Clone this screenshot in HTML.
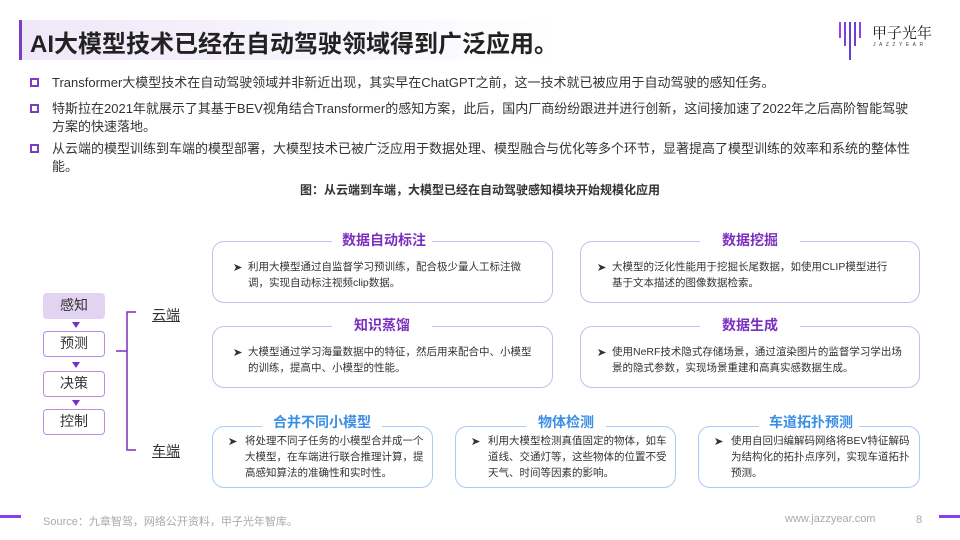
<!DOCTYPE html>
<html><head><meta charset="utf-8"><style>
*{margin:0;padding:0;box-sizing:border-box}
body{width:960px;height:540px;overflow:hidden;background:#fff;font-family:"Liberation Sans","Noto Sans CJK SC",sans-serif;color:#333;position:relative}
.abs{position:absolute}
.title{left:19px;top:20px;width:600px;height:40px;border-left:3px solid #7a3fc0;background:linear-gradient(90deg,#efe8f8,#fff 90%);}
.title span{position:absolute;left:8px;top:4px;font-size:24px;font-weight:bold;color:#222;white-space:nowrap}
.bl{left:30px;font-size:13px;line-height:18px;color:#333;width:880px}
.bl i{position:absolute;left:0;top:4px;width:9px;height:9px;border:2px solid #7a3fc0}
.bl p{margin-left:22px;width:858px}
.cap{left:0;width:960px;text-align:center;top:181px;font-size:12px;font-weight:bold;color:#333}
.box{border:1.5px solid #d2b8ee;border-radius:12px;background:#fff}
.box.b{border-color:#a9cbf5}
.bt{font-size:14px;font-weight:bold;color:#7b2fbf;background:#fff;padding:0 10px;white-space:nowrap;text-align:center}
.bt.b{color:#3c8fe6}
.bx{font-size:10.5px;line-height:16px;color:#333}
.bx svg{position:absolute;left:0;top:4px}
.fl{left:43px;width:62px;height:26px;border:1.5px solid #b98ee0;border-radius:4px;text-align:center;font-size:14px;line-height:23px;color:#333;background:#fff}
.ar{left:72px;width:0;height:0;border-left:4px solid transparent;border-right:4px solid transparent;border-top:6px solid #7b2fbf}
</style></head><body>
<div class="abs title"><span>AI大模型技术已经在自动驾驶领域得到广泛应用。</span></div>
<div class="abs" style="left:838px;top:20px;width:25px;height:40px">
<svg width="25" height="42"><g stroke-width="2"><line x1="2" y1="2" x2="2" y2="18" stroke="#a040e0"/><line x1="7" y1="2" x2="7" y2="26" stroke="#8040e0"/><line x1="12" y1="2" x2="12" y2="40" stroke="#6040d0"/><line x1="17" y1="2" x2="17" y2="26" stroke="#7040d0"/><line x1="22" y1="2" x2="22" y2="18" stroke="#9040e0"/></g></svg></div>
<div class="abs" style="left:872px;top:22px;font-size:15px;color:#222;font-family:'Noto Serif CJK SC',serif">甲子光年</div>
<div class="abs" style="left:873px;top:42px;font-size:5px;letter-spacing:3.5px;color:#444">JAZZYEAR</div>

<div class="abs bl" style="top:74px"><i></i><p>Transformer大模型技术在自动驾驶领域并非新近出现，其实早在ChatGPT之前，这一技术就已被应用于自动驾驶的感知任务。</p></div>
<div class="abs bl" style="top:100px"><i></i><p>特斯拉在2021年就展示了其基于BEV视角结合Transformer的感知方案，此后，国内厂商纷纷跟进并进行创新，这间接加速了2022年之后高阶智能驾驶方案的快速落地。</p></div>
<div class="abs bl" style="top:140px"><i></i><p>从云端的模型训练到车端的模型部署，大模型技术已被广泛应用于数据处理、模型融合与优化等多个环节，显著提高了模型训练的效率和系统的整体性能。</p></div>
<div class="abs cap">图：从云端到车端，大模型已经在自动驾驶感知模块开始规模化应用</div>

<div class="abs fl" style="top:293px;background:#e3d3f3;border-color:#e3d3f3">感知</div>
<div class="abs ar" style="top:322px"></div>
<div class="abs fl" style="top:331px">预测</div>
<div class="abs ar" style="top:362px"></div>
<div class="abs fl" style="top:371px">决策</div>
<div class="abs ar" style="top:400px"></div>
<div class="abs fl" style="top:409px">控制</div>
<svg class="abs" style="left:114px;top:310px" width="24" height="144"><path d="M22 2 H13 V140 H22 M13 41 H2" fill="none" stroke="#7b2fbf" stroke-width="1.5"/></svg>
<div class="abs" style="left:152px;top:305px;font-size:14px;text-decoration:underline;color:#333">云端</div>
<div class="abs" style="left:152px;top:441px;font-size:14px;text-decoration:underline;color:#333">车端</div>

<div class="abs box" style="left:212px;top:241px;width:341px;height:62px"></div>
<div class="abs bt" style="left:332px;top:230px;width:100px">数据自动标注</div>
<div class="abs bx" style="left:233px;top:259px;width:300px"><svg width="10" height="9"><path d="M1 1 L9 4.5 L1 8 L3 4.5Z" fill="#333"/></svg><p style="margin-left:15px">利用大模型通过自监督学习预训练，配合极少量人工标注微调，实现自动标注视频clip数据。</p></div>
<div class="abs box" style="left:580px;top:241px;width:340px;height:62px"></div>
<div class="abs bt" style="left:700px;top:230px;width:100px">数据挖掘</div>
<div class="abs bx" style="left:597px;top:259px;width:300px"><svg width="10" height="9"><path d="M1 1 L9 4.5 L1 8 L3 4.5Z" fill="#333"/></svg><p style="margin-left:15px">大模型的泛化性能用于挖掘长尾数据，如使用CLIP模型进行基于文本描述的图像数据检索。</p></div>
<div class="abs box" style="left:212px;top:326px;width:341px;height:62px"></div>
<div class="abs bt" style="left:332px;top:315px;width:100px">知识蒸馏</div>
<div class="abs bx" style="left:233px;top:344px;width:300px"><svg width="10" height="9"><path d="M1 1 L9 4.5 L1 8 L3 4.5Z" fill="#333"/></svg><p style="margin-left:15px">大模型通过学习海量数据中的特征，然后用来配合中、小模型的训练，提高中、小模型的性能。</p></div>
<div class="abs box" style="left:580px;top:326px;width:340px;height:62px"></div>
<div class="abs bt" style="left:700px;top:315px;width:100px">数据生成</div>
<div class="abs bx" style="left:597px;top:344px;width:310px"><svg width="10" height="9"><path d="M1 1 L9 4.5 L1 8 L3 4.5Z" fill="#333"/></svg><p style="margin-left:15px">使用NeRF技术隐式存储场景，通过渲染图片的监督学习学出场景的隐式参数，实现场景重建和高真实感数据生成。</p></div>

<div class="abs box b" style="left:212px;top:426px;width:221px;height:62px"></div>
<div class="abs bt b" style="left:262px;top:412px;width:120px">合并不同小模型</div>
<div class="abs bx" style="left:228px;top:433px;width:202px"><svg width="10" height="9"><path d="M1 1 L9 4.5 L1 8 L3 4.5Z" fill="#333"/></svg><p style="margin-left:17px">将处理不同子任务的小模型合并成一个大模型，在车端进行联合推理计算，提高感知算法的准确性和实时性。</p></div>
<div class="abs box b" style="left:455px;top:426px;width:221px;height:62px"></div>
<div class="abs bt b" style="left:526px;top:412px;width:80px">物体检测</div>
<div class="abs bx" style="left:471px;top:433px;width:202px"><svg width="10" height="9"><path d="M1 1 L9 4.5 L1 8 L3 4.5Z" fill="#333"/></svg><p style="margin-left:17px">利用大模型检测真值固定的物体，如车道线、交通灯等，这些物体的位置不受天气、时间等因素的影响。</p></div>
<div class="abs box b" style="left:698px;top:426px;width:222px;height:62px"></div>
<div class="abs bt b" style="left:759px;top:412px;width:100px">车道拓扑预测</div>
<div class="abs bx" style="left:714px;top:433px;width:200px"><svg width="10" height="9"><path d="M1 1 L9 4.5 L1 8 L3 4.5Z" fill="#333"/></svg><p style="margin-left:17px">使用自回归编解码网络将BEV特征解码为结构化的拓扑点序列，实现车道拓扑预测。</p></div>

<div class="abs" style="left:0;top:515px;width:21px;height:3px;background:#8a3ff0"></div>
<div class="abs" style="left:939px;top:515px;width:21px;height:3px;background:#8a3ff0"></div>
<div class="abs" style="left:43px;top:513px;font-size:11px;color:#aaa">Source：九章智驾，网络公开资料，甲子光年智库。</div>
<div class="abs" style="left:785px;top:513px;font-size:11px;color:#aaa">www.jazzyear.com</div>
<div class="abs" style="left:916px;top:514px;font-size:11px;color:#aaa">8</div>
</body></html>
